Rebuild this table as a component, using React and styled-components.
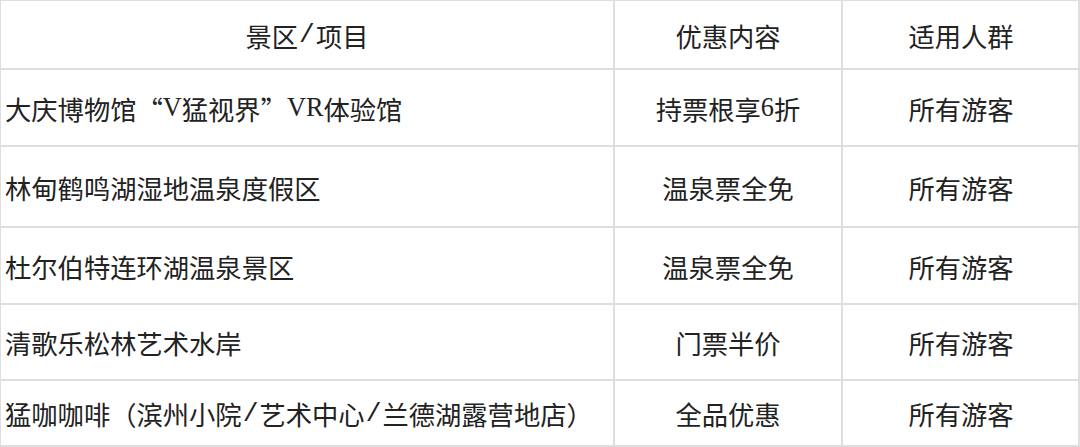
import React from "react";
import styled, { createGlobalStyle } from "styled-components";

const Global = createGlobalStyle`
  html, body { margin: 0; padding: 0; background: #fff; }
  body { font-family: "Noto Sans CJK SC", sans-serif; }
`;

const Table = styled.div`
  display: grid;
  grid-template-columns: 614px 228px 236px;
  grid-template-rows: ${(p) => p.$rows};
  width: 1080px;
  height: 447px;
  box-sizing: border-box;
  border-top: 1px solid #dedede;
  border-left: 1px solid #dedede;
  border-right: 2px solid #dedede;
  border-bottom: 2px solid #dedede;
  color: #222;
`;

const Cell = styled.div`
  display: flex;
  align-items: center;
  justify-content: ${(p) => (p.$align === "left" ? "flex-start" : "center")};
  padding-left: ${(p) => (p.$align === "left" ? "4px" : "0")};
  box-sizing: border-box;
  font-family: "Noto Sans CJK SC", sans-serif;
  font-size: 26.3px;
  font-weight: 400;
  white-space: nowrap;
  border-right: ${(p) => (p.$last ? "none" : "2px solid #dedede")};
  border-bottom: ${(p) => (p.$lastRow ? "none" : "2px solid #dedede")};
  padding-top: 1px;
`;

const Latin = styled.span`
  font-family: "Liberation Serif", serif;
`;

const Slash = styled.span`
  font-family: "Liberation Mono", monospace;
  padding: 0 1px;
`;

const header = [
  <>
    景区<Slash>/</Slash>项目
  </>,
  "优惠内容",
  "适用人群",
];
const rows = [
  [
    <>
      大庆博物馆“<Latin>V</Latin>猛视界”<Latin>VR</Latin>体验馆
    </>,
    <>
      持票根享<Latin>6</Latin>折
    </>,
    "所有游客",
  ],
  ["林甸鹤鸣湖湿地温泉度假区", "温泉票全免", "所有游客"],
  ["杜尔伯特连环湖温泉景区", "温泉票全免", "所有游客"],
  ["清歌乐松林艺术水岸", "门票半价", "所有游客"],
  [
    <>
      猛咖咖啡（滨州小院<Slash>/</Slash>艺术中心<Slash>/</Slash>兰德湖露营地店）
    </>,
    "全品优惠",
    "所有游客",
  ],
];

export default function App() {
  return (
    <>
      <Global />
      <Table $rows="69px 77px 81px 77px 76px 64px" lang="zh-CN">
        {header.map((h, i) => (
          <Cell key={"h" + i} $last={i === 2}>
            {h}
          </Cell>
        ))}
        {rows.map((r, ri) =>
          r.map((c, ci) => (
            <Cell
              key={ri + "-" + ci}
              $align={ci === 0 ? "left" : "center"}
              $last={ci === 2}
              $lastRow={ri === rows.length - 1}
            >
              {c}
            </Cell>
          ))
        )}
      </Table>
    </>
  );
}
